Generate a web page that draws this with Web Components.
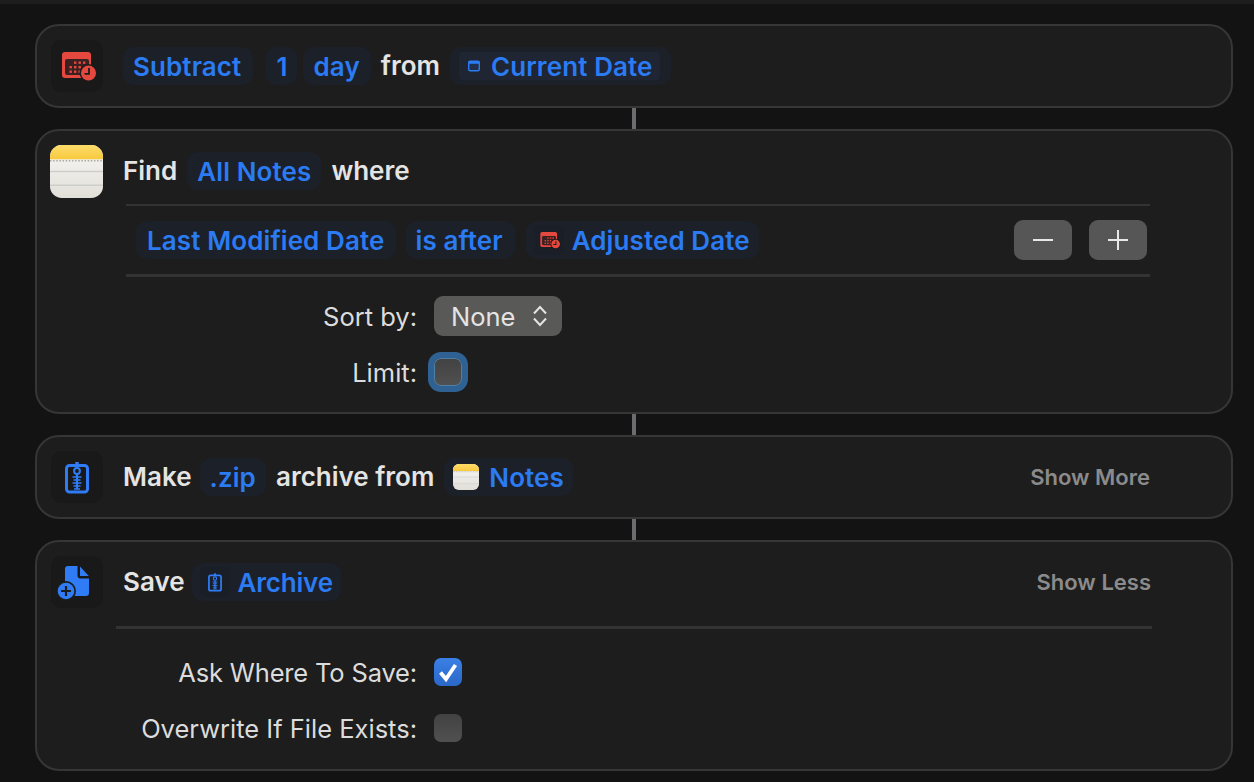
<!DOCTYPE html>
<html>
<head>
<meta charset="utf-8">
<title>Shortcut</title>
<style>
html, body { margin: 0; height: 100%; background: #131313; }
body { font-family: Inter, "Noto Sans", sans-serif; overflow: hidden; }
</style>
</head>
<body>
<shortcut-page>
  <action-card>
    <app-icon slot="icon" name="calendar"></app-icon>
    <token-pill tail="12">Subtract</token-pill>
    <token-pill style="margin-left:3px">1</token-pill>
    <token-pill tail="11" style="margin-left:-4px">day</token-pill>
    <word-label>from</word-label>
    <token-pill lead="9" tail="11"><var-chip>Current Date</var-chip></token-pill>
  </action-card>
  <flow-link></flow-link>
  <action-card>
    <app-icon slot="icon" name="notes"></app-icon>
    <word-label>Find</word-label>
    <token-pill>All Notes</token-pill>
    <word-label>where</word-label>
    <filter-panel slot="body"></filter-panel>
    <form-rows slot="body" style="padding:19px 0 20px">
      <form-row label="Sort by:"><pop-up>None</pop-up></form-row>
      <form-row label="Limit:"><check-box focused></check-box></form-row>
    </form-rows>
  </action-card>
  <flow-link></flow-link>
  <action-card>
    <app-icon slot="icon" name="zip"></app-icon>
    <word-label>Make</word-label>
    <token-pill style="margin-left:-2px">.zip</token-pill>
    <word-label>archive from</word-label>
    <token-pill lead="9" tail="9"><small-icon name="notes"></small-icon>Notes</token-pill>
    <show-toggle slot="side">Show More</show-toggle>
  </action-card>
  <flow-link></flow-link>
  <action-card>
    <app-icon slot="icon" name="save"></app-icon>
    <word-label>Save</word-label>
    <token-pill lead="8" tail="8" style="margin-left:-3px;letter-spacing:-.2px"><small-icon name="zip" tile></small-icon>Archive</token-pill>
    <show-toggle slot="side" style="margin-right:-1px">Show Less</show-toggle>
    <rule-line slot="body" style="margin:4px 79px 0"></rule-line>
    <form-rows slot="body" style="padding:23px 0 21px">
      <form-row label="Ask Where To Save:" style="letter-spacing:-.17px"><check-box checked></check-box></form-row>
      <form-row label="Overwrite If File Exists:"><check-box></check-box></form-row>
    </form-rows>
  </action-card>
</shortcut-page>

<script>
const ICONS = {
  calendar: `<svg viewBox="0 0 52 52">
    <path fill="#e5483f" d="M14 12h23a3 3 0 0 1 3 3v20a3 3 0 0 1-3 3H14a3 3 0 0 1-3-3V15a3 3 0 0 1 3-3z"/>
    <rect x="14" y="19" width="24" height="16" rx="2" fill="#3a2020"/>
    <g fill="#e5483f"><rect x="23" y="21.5" width="2.4" height="2.4"/><rect x="27.5" y="21.5" width="2.4" height="2.4"/><rect x="32" y="21.5" width="2.4" height="2.4"/><rect x="18.5" y="26" width="2.4" height="2.4"/><rect x="23" y="26" width="2.4" height="2.4"/><rect x="27.5" y="26" width="2.4" height="2.4"/><rect x="32" y="26" width="2.4" height="2.4"/><rect x="18.5" y="30.5" width="2.4" height="2.4"/><rect x="23" y="30.5" width="2.4" height="2.4"/><rect x="27.5" y="30.5" width="2.4" height="2.4"/></g>
    <circle cx="37.5" cy="33" r="9" fill="#1c1c1c"/><circle cx="37.5" cy="33" r="7.5" fill="#e5483f"/>
    <path d="M38 28V33.8H33.5" fill="none" stroke="#1c1c1c" stroke-width="1.8"/>
  </svg>`,
  notes: `<svg viewBox="0 0 54 54">
    <defs>
      <linearGradient id="y" x1="0" x2="0" y1="0" y2="1"><stop offset="0" stop-color="#fddc6a"/><stop offset="1" stop-color="#f8c93e"/></linearGradient>
      <linearGradient id="p" x1="0" x2="0" y1="0" y2="1"><stop offset="0" stop-color="#f8f7f4"/><stop offset="1" stop-color="#e2dfd9"/></linearGradient>
      <clipPath id="c"><rect width="54" height="54" rx="12"/></clipPath>
    </defs>
    <g clip-path="url(#c)">
      <rect width="54" height="54" fill="url(#p)"/>
      <rect width="54" height="14.5" fill="url(#y)"/>
      <path d="M0 16H54" stroke="#a9a69e" stroke-width="1.6" stroke-dasharray="1.5 1.7"/>
      <path d="M0 27H54M0 41H54" stroke="#cfcdc7" stroke-width="1.3"/>
    </g>
  </svg>`,
  zip: `<svg viewBox="0 0 52 52" fill="none">
    <rect x="15.5" y="14.5" width="21" height="26.5" rx="3" stroke="#2f7cf6" stroke-width="3"/>
    <rect x="24.3" y="11" width="3.4" height="5" fill="#2f7cf6"/>
    <path d="M26 23V38" stroke="#2f7cf6" stroke-width="2.2"/>
    <path d="M21.5 26h9M22.5 29h7M21.5 32h9M22.5 35h7M23 38h6" stroke="#2f7cf6" stroke-width="1.5"/>
    <circle cx="26" cy="20" r="2.9" fill="#1c1c1c" stroke="#2f7cf6" stroke-width="2"/>
  </svg>`,
  save: `<svg viewBox="0 0 52 52">
    <path fill="#2f7cf6" d="M17 10h9.5v9.5a3 3 0 0 0 3 3H38V37a3 3 0 0 1-3 3H17a3 3 0 0 1-3-3V13a3 3 0 0 1 3-3z"/>
    <path fill="#2f7cf6" d="M29 10.5 37.8 20H29z"/>
    <circle cx="15" cy="35" r="10" fill="#1c1c1c"/><circle cx="15" cy="35" r="8.3" fill="#2f7cf6"/>
    <path d="M15 30v10M10 35h10" stroke="#1c1c1c" stroke-width="2.2"/>
  </svg>`
};

// small helper, every element here has the same setup
function shadow(el, html) {
  el.attachShadow({ mode: 'open' }).innerHTML = html;
}

customElements.define('shortcut-page', class extends HTMLElement {
  constructor() {
    super();
    shadow(this, `<style>
      :host { display: block; height: 782px; box-sizing: border-box; padding: 24px 21px 0 35px;
        background: linear-gradient(#1d1d1d 0 4px, #131313 4px); }
    </style><slot></slot>`);
  }
});

customElements.define('action-card', class extends HTMLElement {
  constructor() {
    super();
    shadow(this, `<style>
      :host { display: block; background: #1d1d1d; border: 2px solid #363636; border-radius: 24px; }
      .head { height: 80px; display: flex; align-items: center; padding: 0 81px 0 14px; }
      .words { display: flex; align-items: center; gap: 10px; margin-left: 20px; flex: 1; }
    </style>
    <div class="head">
      <slot name="icon"></slot>
      <div class="words"><slot></slot></div>
      <slot name="side"></slot>
    </div>
    <slot name="body"></slot>`);
  }
});

customElements.define('flow-link', class extends HTMLElement {
  constructor() {
    super();
    shadow(this, `<style>
      :host { display: flex; justify-content: center; height: 21px; }
      i { width: 4px; background: #6b6b70; }
    </style><i></i>`);
  }
});

customElements.define('app-icon', class extends HTMLElement {
  constructor() {
    super();
    const name = this.getAttribute('name');
    const flush = name === 'notes';
    shadow(this, `<style>
      :host { display: block; width: 52px; height: 52px; flex: none; }
      div { width: 52px; height: 52px; border-radius: 10px; background: ${flush ? 'transparent' : '#191919'}; }
      svg { display: block; width: ${flush ? '53px' : '52px'}; height: ${flush ? '53px' : '52px'}; margin-left: ${flush ? '-1px' : '0'}; }
    </style><div>${ICONS[name]}</div>`);
  }
});

customElements.define('small-icon', class extends HTMLElement {
  constructor() {
    super();
    const name = this.getAttribute('name');
    const tile = this.hasAttribute('tile');
    const size = tile ? 30 : 26;
    shadow(this, `<style>
      :host { display: block; width: ${size}px; height: ${size}px; flex: none; margin-right: ${tile ? 8 : 10}px; }
      div { height: 100%; border-radius: 6px; background: ${tile ? '#1a1e26' : 'transparent'}; }
      svg { display: block; width: 100%; height: 100%; }
    </style><div>${ICONS[name]}</div>`);
  }
});

customElements.define('word-label', class extends HTMLElement {
  constructor() {
    super();
    shadow(this, `<style>
      :host { display: block; color: #e4e4e4; font-size: 26px; font-weight: 600; line-height: 38px; white-space: nowrap; }
    </style><slot></slot>`);
  }
});

customElements.define('token-pill', class extends HTMLElement {
  constructor() {
    super();
    const lead = this.getAttribute('lead') || 10;
    const tail = this.getAttribute('tail') || 10;
    shadow(this, `<style>
      :host { display: flex; align-items: center; height: 38px; padding: 0 ${tail}px 0 ${lead}px; background: #1c2029; border-radius: 11px;
        color: #2b7bf3; font-size: 26px; font-weight: 600; letter-spacing: .1px; white-space: nowrap; }
    </style><slot></slot>`);
  }
});

// variable inside a pill, with the lighter block behind it
customElements.define('var-chip', class extends HTMLElement {
  constructor() {
    super();
    shadow(this, `<style>
      :host { display: flex; align-items: center; height: 28px; padding: 0 7px 0 8px; gap: 10px; background: #1f2532; border-radius: 4px; }
      svg { width: 14px; height: 14px; display: block; }
    </style>
    <svg viewBox="0 0 14 14"><rect x="1.7" y="2.2" width="10.6" height="9.6" rx="1.5" fill="#1f2f4c" stroke="#2b7bf3" stroke-width="1.4"/><rect x="1.5" y="2" width="11" height="2.8" fill="#2b7bf3"/></svg>
    <slot></slot>`);
  }
});

customElements.define('rule-line', class extends HTMLElement {
  constructor() {
    super();
    shadow(this, `<style>:host { display: block; height: 3px; background: #333; }</style>`);
  }
});

customElements.define('filter-panel', class extends HTMLElement {
  constructor() {
    super();
    shadow(this, `<style>
      :host { display: block; margin: -7px 81px 0 89px; border-top: 2px solid #333; border-bottom: 3px solid #333; color: #2b7bf3; }
      .row { height: 68px; display: flex; align-items: center; gap: 10px; padding-left: 10px; }
      .gap { flex: 1; }
      .btn { width: 58px; height: 40px; border-radius: 9px; background: #565656; display: grid; place-items: center; }
      .btn + .btn { margin-left: 7px; margin-right: 3px; }
      svg { width: 24px; height: 24px; display: block; }
      .adj { margin-left: 1px; }
    </style>
    <div class="row">
      <token-pill lead="11" tail="11">Last Modified Date</token-pill>
      <token-pill tail="12">is after</token-pill>
      <token-pill class="adj" lead="8" tail="9"><small-icon name="calendar" tile></small-icon>Adjusted Date</token-pill>
      <div class="gap"></div>
      <div class="btn"><svg viewBox="0 0 24 24"><path d="M2 12H22" stroke="#e8e8e8" stroke-width="2"/></svg></div>
      <div class="btn"><svg viewBox="0 0 24 24"><path d="M2 12H22M12 2V22" stroke="#e8e8e8" stroke-width="2"/></svg></div>
    </div>`);
  }
});

customElements.define('form-rows', class extends HTMLElement {
  constructor() {
    super();
    shadow(this, `<style>:host { display: flex; flex-direction: column; gap: 16px; }</style><slot></slot>`);
  }
});

customElements.define('form-row', class extends HTMLElement {
  constructor() {
    super();
    shadow(this, `<style>
      :host { display: grid; grid-template-columns: 380px auto; column-gap: 17px; align-items: center; height: 40px; justify-content: start; }
      label { text-align: right; color: #dcdcdc; font-size: 25.5px; font-weight: 400; white-space: nowrap; }
    </style><label>${this.getAttribute('label')}</label><div><slot></slot></div>`);
  }
});

customElements.define('pop-up', class extends HTMLElement {
  constructor() {
    super();
    shadow(this, `<style>
      :host { display: flex; align-items: center; justify-content: space-between; width: 128px; height: 40px; box-sizing: border-box; padding: 0 14px 0 17px;
        background: #595958; border-radius: 9px; color: #e4e4e4; font-size: 25.5px; }
      svg { width: 16px; height: 24px; display: block; }
    </style><slot></slot>
    <svg viewBox="0 0 16 24" fill="none" stroke="#e4e4e4" stroke-width="2"><path d="M2 9.5 8 3l6 6.5M2 14.5 8 21l6-6.5"/></svg>`);
  }
});

customElements.define('check-box', class extends HTMLElement {
  constructor() {
    super();
    const on = this.hasAttribute('checked');
    const ring = this.hasAttribute('focused') ? 'box-shadow: inset 0 0 0 1px #4d7fa8, 0 0 0 6px #2f6293;' : '';
    shadow(this, `<style>
      :host { display: block; width: 28px; height: 28px; border-radius: 7px; ${ring}
        background: ${on ? 'linear-gradient(#3a80e6,#2a68c8)' : 'linear-gradient(#424242,#505050)'}; }
      svg { display: block; width: 28px; height: 28px; }
    </style>${on ? '<svg viewBox="0 0 28 28"><path d="M6.5 14.5 12 21 21.5 7" fill="none" stroke="#fff" stroke-width="3.8"/></svg>' : ''}`);
  }
});

customElements.define('show-toggle', class extends HTMLElement {
  constructor() {
    super();
    shadow(this, `<style>:host { display: block; color: #8b8b8b; font-size: 22px; font-weight: 600; white-space: nowrap; }</style><slot></slot>`);
  }
});
</script>
</body>
</html>
